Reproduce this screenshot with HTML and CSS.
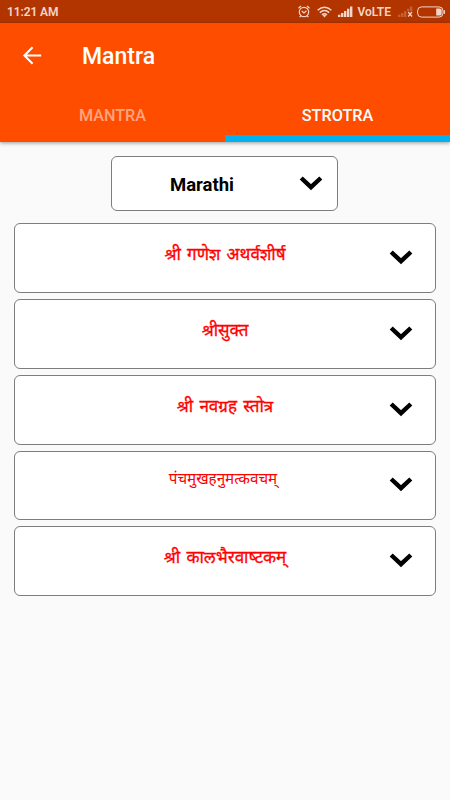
FILE: index.html
```html
<!DOCTYPE html>
<html lang="mr">
<head>
    <meta charset="UTF-8">
    <meta name="viewport" content="width=device-width, initial-scale=1.0">
    <title>Mantra</title>
    <link rel="stylesheet" href="styles.css">
</head>
<body>
    <!-- Shared chevron -->
    <svg class="defs" width="0" height="0">
        <symbol id="chevron" viewBox="0 0 24 16">
            <path d="M2.2 3 L12 12.2 L21.8 3" fill="none" stroke="#000" stroke-width="4.4" />
        </symbol>
    </svg>

    <!-- Status Bar -->
    <div class="status-bar">
        <span class="time">11:21 AM</span>
        <div class="status-icons">
            <svg class="alarm" width="12" height="13" viewBox="0 0 12 13" fill="none" stroke="currentColor">
                <circle cx="6" cy="7" r="4.7" stroke-width="1.2" />
                <path d="M.5 3.2 L3 1 M9 1 L11.5 3.2 M2.8 10.8 L1.6 12.2 M9.2 10.8 L10.4 12.2 M3.7 6 L6 7.9 L8.5 5.8" stroke-width="1.2" />
            </svg>
            <svg class="wifi" width="15" height="12" viewBox="0 0 15 12" fill="none" stroke="currentColor" stroke-width="1.5">
                <path d="M.6 4.2 Q7.5 -1.7 14.4 4.2 M2.8 6.6 Q7.5 2.5 12.2 6.6 M5 8.9 Q7.5 6.6 10 8.9" />
                <path d="M5.8 9.4 Q7.5 8 9.2 9.4 L7.5 11.4 Z" fill="currentColor" stroke="none" />
            </svg>
            <svg class="signal" width="15" height="11" viewBox="0 0 15 11" fill="currentColor">
                <path d="M0 8.8h2.4V11H0z M3 7h2.4v4H3z M6 5h2.4v6H6z M9 2.8h2.4V11H9z M12 .5h2.4V11H12z" />
            </svg>
            <span class="volte">VoLTE</span>
            <svg class="no-signal" width="15" height="11" viewBox="0 0 15 11">
                <path d="M0 8.8h2.4V11H0z M3 7h2.4v4H3z M6 5h2.4v6H6z M9 2.8h2.4V5H9z M12 .5h2.4V5H12z" fill="#cb734f" opacity=".7" />
                <path d="M10.2 6 L14 10.5 M14 6 L10.2 10.5" stroke="currentColor" stroke-width="1.2" />
            </svg>
            <svg class="battery" width="29" height="12" viewBox="0 0 29 12">
                <rect x=".6" y=".9" width="25.4" height="10.2" rx="4" fill="none" stroke="currentColor" stroke-width="1" />
                <path d="M19.2 2.4h3.3q2.2 0 2.2 2.2v2.8q0 2.2-2.2 2.2h-3.3z M26.7 4h.5q.8 0 .8.8v2.4q0 .8-.8.8h-.5z" fill="currentColor" />
            </svg>
        </div>
    </div>

    <!-- App Bar -->
    <header class="app-bar">
        <div class="toolbar">
            <svg class="back" width="20" height="20" viewBox="0 0 20 20" fill="none" stroke="#fff" stroke-width="2">
                <path d="M19.2 9.5 H2.6 M10.6 1.3 L2.4 9.5 L10.6 17.7" />
            </svg>
            <h1>Mantra</h1>
        </div>
        <nav class="tabs">
            <a class="tab">MANTRA</a>
            <a class="tab active">STROTRA</a>
        </nav>
    </header>

    <main>
        <!-- Language Picker -->
        <div class="language">
            <span>Marathi</span>
            <svg class="chevron"><use href="#chevron" /></svg>
        </div>

        <!-- Strotra List -->
        <ul class="list">
            <li class="card">
                <span class="name">श्री गणेश अथर्वशीर्ष</span>
                <svg class="chevron"><use href="#chevron" /></svg>
            </li>
            <li class="card">
                <span class="name">श्रीसुक्त</span>
                <svg class="chevron"><use href="#chevron" /></svg>
            </li>
            <li class="card">
                <span class="name">श्री नवग्रह स्तोत्र</span>
                <svg class="chevron"><use href="#chevron" /></svg>
            </li>
            <li class="card">
                <span class="name light">पंचमुखहनुमत्कवचम्</span>
                <svg class="chevron"><use href="#chevron" /></svg>
            </li>
            <li class="card">
                <span class="name">श्री कालभैरवाष्&zwj;टकम्</span>
                <svg class="chevron"><use href="#chevron" /></svg>
            </li>
        </ul>
    </main>
</body>
</html>
```

FILE: styles.css
```css
* {
    margin: 0;
    padding: 0;
    box-sizing: border-box;
}

body {
    font-family: Roboto, 'Noto Sans', sans-serif;
    background: #fafafa;
    height: 800px;
    overflow: hidden;
}

svg {
    display: block;
    flex: none;
}

.defs {
    display: none;
}

/* Status bar */
.status-bar {
    display: flex;
    justify-content: space-between;
    height: 23px;
    padding: 0 4px 0 7px;
    background: #b23500;
    color: #f3d5c9;
    font-size: 12px;
    font-weight: 600;
    line-height: 24px;
}

.time {
    letter-spacing: -0.1px;
}

.status-icons {
    display: flex;
    align-items: center;
}

.wifi {
    margin-left: 7px;
}

.signal {
    margin-left: 6px;
}

.volte {
    margin-left: 4px;
}

.no-signal {
    margin-left: 7px;
}

.battery {
    margin-left: 4px;
}

/* App bar */
.app-bar {
    height: 119px;
    background: #ff4d00;
    box-shadow: 0 1px 4px rgba(0, 0, 0, 0.4);
}

.toolbar {
    display: flex;
    align-items: center;
    height: 65px;
    padding-left: 22px;
}

h1 {
    margin-left: 40px;
    padding-top: 2px;
    color: #fff;
    font-size: 23px;
    font-weight: 500;
}

.tabs {
    display: flex;
    height: 54px;
}

.tab {
    flex: 1;
    padding-top: 18px;
    color: #ffa680;
    font-size: 16.2px;
    font-weight: 500;
    line-height: 20px;
    text-align: center;
}

.tab.active {
    color: #fff;
    border-bottom: 7px solid #03b1f0;
}

main {
    padding: 14px 14px 0;
}

.language,
.card {
    background: #fff;
    border: 1px solid #7d7d7d;
    border-radius: 6px;
}

.chevron {
    width: 24px;
    height: 16px;
    margin-top: -2px;
}

/* Language picker */
.language {
    display: flex;
    align-items: center;
    justify-content: space-between;
    width: 227px;
    height: 55px;
    margin: 0 0 0 97px;
    padding: 0 14px 0 58px;
    font-size: 18.5px;
    font-weight: 700;
}

.language span {
    padding-top: 2px;
}

/* List */
.list {
    display: grid;
    gap: 6px;
    margin-top: 12px;
    list-style: none;
}

.card {
    display: grid;
    grid-template-columns: 24px 1fr 24px;
    align-items: center;
    height: 69.85px;
    padding: 0 22px;
}

.name {
    grid-column: 2;
    padding-bottom: 8px;
    color: #f00;
    font-size: 17px;
    word-spacing: 2px;
    line-height: 24px;
    text-align: center;
    white-space: nowrap;
    -webkit-text-stroke: 0.3px #f00;
}

.name.light {
    padding: 0 4px 12px 0;
    font-size: 15.2px;
    -webkit-text-stroke: 0;
}
```
